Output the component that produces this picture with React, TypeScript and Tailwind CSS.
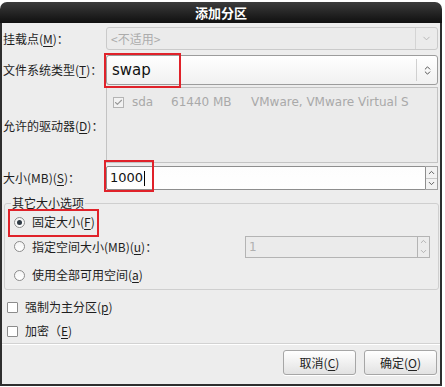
import { ChevronDown, ChevronUp, ChevronsUpDown, Check } from 'lucide-react'

const FONT = { fontFamily: '"Noto Sans CJK SC", "DejaVu Sans", sans-serif' }
const LATIN = { fontFamily: '"DejaVu Sans", "Noto Sans CJK SC", sans-serif' }

function Key({ k }: { k: string }) {
  return <span className="underline underline-offset-2">{k}</span>
}

function Radio({ checked }: { checked?: boolean }) {
  return (
    <span className="w-[11px] h-[11px] rounded-full border border-[#8c8c8c] bg-gradient-to-b from-[#f4f4f4] to-white flex items-center justify-center shrink-0">
      {checked && <span className="w-[5px] h-[5px] rounded-full bg-[#2f3a44]" />}
    </span>
  )
}

function Box() {
  return <span className="w-[11px] h-[11px] border border-[#8c8c8c] bg-white rounded-[1px] shrink-0" />
}

function Button({ children }: { children: React.ReactNode }) {
  return (
    <button className="w-[73px] h-[25px] rounded-[3px] border border-[#a6a6a6] bg-gradient-to-b from-white to-[#e2e2e2] text-[12px] text-[#222] shadow-[0_1px_0_#fff]">
      {children}
    </button>
  )
}

export default function App() {
  return (
    <div className="w-[445px] h-[387px] bg-white overflow-hidden text-[#1e1e1e]" style={FONT}>
      <div className="w-[442px] h-[386px] flex flex-col">
        <div className="h-[21px] mt-[2px] rounded-t-[7px] bg-gradient-to-b from-[#3c3c3c] to-[#101010] text-white font-bold text-[13px] flex items-center justify-center">
          添加分区
        </div>

        <div className="flex-1 bg-[#ededed] border-x-2 border-b-2 border-[#2e2e2e] relative whitespace-nowrap text-[12px]">
          {/* mount point */}
          <div className="flex items-center mt-[4px] h-[23px]">
            <div className="w-[104px] pl-[1px]">挂载点(<Key k="M" />)：</div>
            <div className="w-[332px] h-full rounded-[3px] border border-[#cacaca] bg-[#ebebeb] flex items-center">
              <span className="flex-1 pl-[4px] text-[#acacac]">&lt;不适用&gt;</span>
              <span className="w-[22px] h-full border-l border-[#d4d4d4] flex items-center justify-center text-[#b4b4b4]">
                <ChevronDown size={11} strokeWidth={2} />
              </span>
            </div>
          </div>

          {/* fs type */}
          <div className="flex items-center mt-[5px] h-[30px]">
            <div className="w-[104px] pl-[1px]">文件系统类型(<Key k="T" />)：</div>
            <div className="w-[332px] h-full rounded-[3px] border border-[#9c9c9c] bg-gradient-to-b from-white to-[#f1f1f1] flex items-center">
              <span className="flex-1 pl-[5px] text-[15px] text-[#111]" style={LATIN}>swap</span>
              <span className="w-[21px] h-[22px] border-l border-[#d0d0d0] flex items-center justify-center text-[#444]">
                <ChevronsUpDown size={11} strokeWidth={2} />
              </span>
            </div>
          </div>

          {/* drives */}
          <div className="flex items-center mt-[2px] h-[76px]">
            <div className="w-[104px] pl-[1px] pt-[2px]">允许的驱动器(<Key k="D" />)：</div>
            <div className="w-[332px] h-full border border-[#c3c3c3] bg-[#ebebeb] pt-[5px] pl-[6px]">
              <div className="flex items-center text-[#a9a9a9]" style={LATIN}>
                <span className="w-[11px] h-[11px] border border-[#b4b4b4] bg-[#f2f2f2] flex items-center justify-center text-[#9a9a9a]">
                  <Check size={9} strokeWidth={3} />
                </span>
                <span className="ml-[8px] w-[39px]">sda</span>
                <span className="w-[80px]">61440 MB</span>
                <span>VMware, VMware Virtual S</span>
              </div>
            </div>
          </div>

          {/* size */}
          <div className="flex items-center mt-[3px] h-[24px]">
            <div className="w-[104px] pl-[1px]">大小(MB)(<Key k="S" />)：</div>
            <div className="w-[320px] h-full border border-[#8e8e8e] rounded-l-[2px] bg-gradient-to-b from-[#fdfdfd] to-white flex items-center pl-[3px] text-[13px] text-[#111]" style={LATIN}>
              1000<span className="w-[1px] h-[15px] bg-black ml-[1px]" />
            </div>
            <div className="w-[12px] h-full flex flex-col border border-l-0 border-[#a0a0a0] bg-[#f2f2f2] text-[#555]">
              <span className="flex-1 flex items-center justify-center border-b border-[#c8c8c8]"><ChevronUp size={9} strokeWidth={2.5} /></span>
              <span className="flex-1 flex items-center justify-center"><ChevronDown size={9} strokeWidth={2.5} /></span>
            </div>
          </div>

          {/* other size options */}
          <fieldset className="ml-[2px] w-[435px] mt-[6px] h-[94px] border border-[#cfcfcf] rounded-[3px] px-[5px]">
            <legend className="ml-[1px] px-[1px] leading-[14px]">其它大小选项</legend>
            <div className="flex items-center gap-[7px] h-[24px] pl-[4px]">
              <Radio checked />
              <span>固定大小(<Key k="F" />)</span>
            </div>
            <div className="flex items-center h-[25px] pl-[4px]">
              <Radio />
              <span className="ml-[7px] w-[213px]">指定空间大小(MB)(<Key k="u" />)：</span>
              <div className="w-[173px] h-[22px] border border-[#b4b4b4] bg-[#ebebeb] flex items-center pl-[3px] text-[#b0b0b0]" style={LATIN}>1</div>
              <div className="w-[12px] h-[22px] flex flex-col border border-l-0 border-[#b4b4b4] bg-[#ececec] text-[#a0a0a0]">
                <span className="flex-1 flex items-center justify-center"><ChevronUp size={9} strokeWidth={2} /></span>
                <span className="flex-1 flex items-center justify-center"><ChevronDown size={9} strokeWidth={2} /></span>
              </div>
            </div>
            <div className="flex items-center gap-[7px] h-[24px] mt-[4px] pl-[4px]">
              <Radio />
              <span>使用全部可用空间(<Key k="a" />)</span>
            </div>
          </fieldset>

          {/* checkboxes */}
          <div className="flex items-center gap-[7px] h-[24px] mt-[5px] pl-[5px]">
            <Box />
            <span>强制为主分区(<Key k="p" />)</span>
          </div>
          <div className="flex items-center gap-[7px] h-[24px] pl-[5px]">
            <Box />
            <span>加密（<Key k="E" />)</span>
          </div>

          <div className="h-[2px] border-t border-[#d2d2d2] border-b border-b-white" />

          <div className="flex justify-end gap-[8px] pr-[3px] mt-[5px]">
            <Button>取消(<Key k="C" />)</Button>
            <Button>确定(<Key k="O" />)</Button>
          </div>

          {/* red annotation boxes */}
          <div className="absolute left-[102px] top-[30px] w-[77px] h-[35px] border-2 border-[#e0222a]" />
          <div className="absolute left-[102px] top-[137px] w-[50px] h-[32px] border-2 border-[#e0222a]" />
          <div className="absolute left-[6px] top-[186px] w-[91px] h-[28px] border-2 border-[#e0222a]" />
        </div>
      </div>
    </div>
  )
}
